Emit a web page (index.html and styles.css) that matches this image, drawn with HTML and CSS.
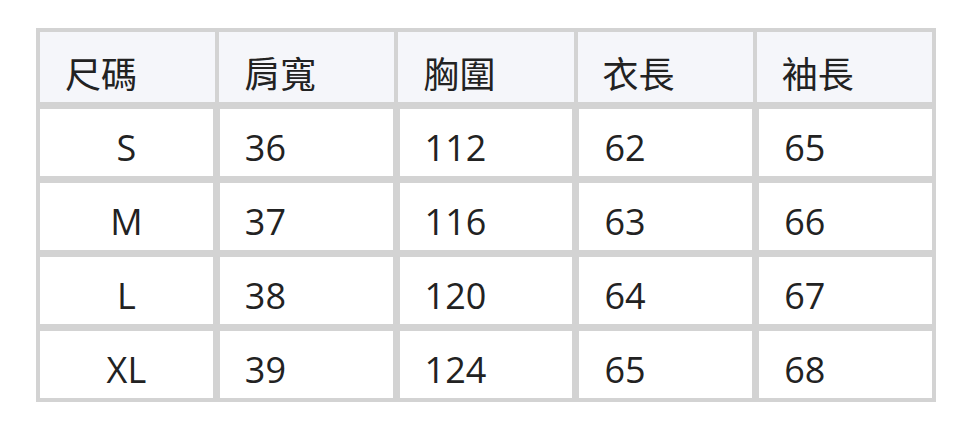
FILE: index.html
```html
<!DOCTYPE html>
<html lang="zh-Hant">
<head>
<meta charset="utf-8">
<title>尺碼表</title>
<link rel="stylesheet" href="styles.css">
</head>
<body>
<div class="size-table">
  <div class="row head">
    <div class="cell">尺碼</div>
    <div class="cell">肩寬</div>
    <div class="cell">胸圍</div>
    <div class="cell">衣長</div>
    <div class="cell">袖長</div>
  </div>
  <div class="row">
    <div class="cell size">S</div>
    <div class="cell">36</div>
    <div class="cell">112</div>
    <div class="cell">62</div>
    <div class="cell">65</div>
  </div>
  <div class="row">
    <div class="cell size">M</div>
    <div class="cell">37</div>
    <div class="cell">116</div>
    <div class="cell">63</div>
    <div class="cell">66</div>
  </div>
  <div class="row">
    <div class="cell size">L</div>
    <div class="cell">38</div>
    <div class="cell">120</div>
    <div class="cell">64</div>
    <div class="cell">67</div>
  </div>
  <div class="row">
    <div class="cell size">XL</div>
    <div class="cell">39</div>
    <div class="cell">124</div>
    <div class="cell">65</div>
    <div class="cell">68</div>
  </div>
</div>
</body>
</html>
```

FILE: styles.css
```css
html, body {
  margin: 0;
  padding: 0;
  background: #ffffff;
}

body {
  font-family: "Open Sans", "Noto Sans", "Noto Sans CJK TC", sans-serif;
  font-weight: 385;
  color: #222222;
}

.size-table {
  width: 900px;
  box-sizing: border-box;
  margin: 28px auto 0;
  padding: 4px;
  background: #d3d3d3;
  display: flex;
  flex-direction: column;
  gap: 7px;
}

.row {
  display: grid;
  grid-template-columns: repeat(5, 1fr);
  column-gap: 7px;
}

.row.head {
  column-gap: 4px;
}

.cell {
  background: #ffffff;
  height: 67px;
  box-sizing: border-box;
  padding: 14px 0 0 25px;
  font-size: 36px;
  line-height: 49px;
  white-space: nowrap;
}

.row.head .cell {
  background: #f5f6fa;
  height: 70px;
  padding-top: 18px;
}

.cell.size {
  padding-left: 0;
  text-align: center;
}
```
